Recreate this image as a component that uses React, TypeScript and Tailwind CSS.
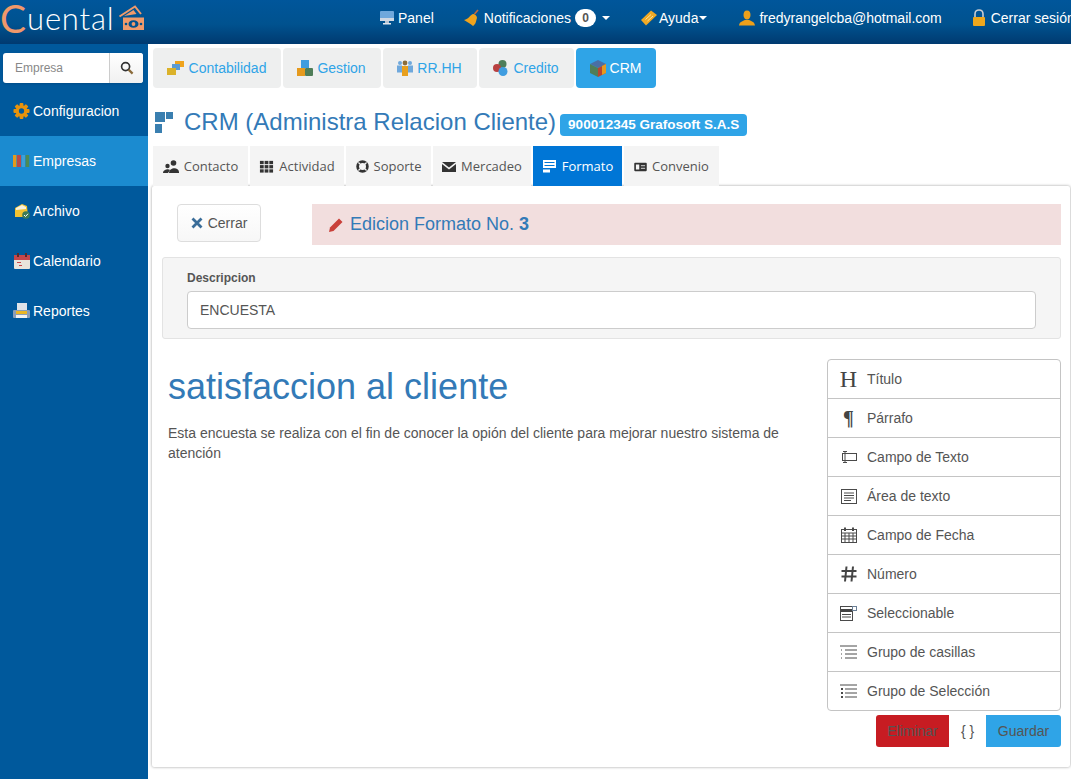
import React from "react";

const Gear = () => (
  <svg width="18" height="18" viewBox="0 0 18 18"><g fill="#e8930c"><circle cx="9" cy="9" r="6.2" /><rect x="7" y="0.500" width="4" height="17" rx="1" /><rect x="0.500" y="7" width="17" height="4" rx="1" /><rect x="7" y="0.500" width="4" height="17" rx="1" transform="rotate(45 9 9)" /><rect x="7" y="0.500" width="4" height="17" rx="1" transform="rotate(-45 9 9)" /></g><circle cx="9" cy="9" r="2.8" fill="#00599c" /></svg>
);
const Books = () => (
  <svg width="17" height="14" viewBox="0 0 17 14"><rect x="0" y="1" width="3.4" height="12" fill="#e39a1d" /><rect x="4" y="1" width="4" height="12" fill="#b84a4a" /><rect x="8.6" y="1" width="3.4" height="12" fill="#3f9fd8" /><rect x="12.6" y="1" width="3.6" height="12" fill="#4d8a54" /></svg>
);
const Folder = () => (
  <svg width="16" height="16" viewBox="0 0 16 16"><path d="M1 5 L8 1 L13 3 L14 14 L1 14 Z" fill="#f2c230" /><path d="M2 5 L8 2 L12 4 L12 6 L2 7 Z" fill="#f6f1e0" /><circle cx="12" cy="12" r="3.8" fill="#3c7a56" /><path d="M10 12 L11.5 13.5 L14 10.8" stroke="#fff" strokeWidth="1" fill="none" /></svg>
);
const Cal = () => (
  <svg width="16" height="16" viewBox="0 0 16 16"><rect x="0" y="2" width="16" height="14" rx="1" fill="#e8e4dc" /><rect x="0" y="2" width="16" height="5" fill="#c6474b" /><rect x="3" y="0" width="2" height="4" fill="#5a2a2a" /><rect x="11" y="0" width="2" height="4" fill="#5a2a2a" /><rect x="3" y="9" width="4" height="1" fill="#c6474b" /><rect x="5" y="12" width="3" height="1" fill="#c6474b" /></svg>
);
const Printer = () => (
  <svg width="17" height="16" viewBox="0 0 17 16"><rect x="4" y="0" width="10" height="8" fill="#dfe3e8" /><rect x="0" y="7" width="17" height="8" rx="1" fill="#8b9db5" /><rect x="3" y="8" width="11" height="3" fill="#eab624" /><rect x="3" y="12" width="11" height="3" fill="#f2f2f2" /></svg>
);
const Monitor = () => (
  <svg width="16" height="16" viewBox="0 0 16 16"><rect x="1" y="1" width="14" height="10" rx="1" fill="#6fa8dc" /><rect x="1" y="8" width="14" height="3" fill="#cfd8e3" /><rect x="6" y="11" width="4" height="2" fill="#b8c4d2" /><rect x="4" y="13" width="8" height="1.5" fill="#dfe6ee" /></svg>
);
const Bell = () => (
  <svg width="16" height="18" viewBox="0 0 16 18"><path d="M0 11 C5 10 6 6 9 5 C11 5 13 7 13 9 C12 12 12 15 9 17 C7 15 3 13 0 11 Z" fill="#efa31d" /><path d="M10.5 5 L14 1" stroke="#c46a3a" strokeWidth="1.600" /></svg>
);
const Ticket = () => (
  <svg width="18" height="16" viewBox="0 0 18 16"><path d="M1 10 L11 0.500 L17 5 L6 15.500 Z" fill="#f0a924" /><path d="M5.500 9.500 L11 4.500 M7.500 11 L13 6" stroke="#fde3a0" strokeWidth="1" /></svg>
);
const User = () => (
  <svg width="16" height="16" viewBox="0 0 16 16"><path d="M8 0.500 C10.500 0.500 11.500 2.500 11.500 5 C11.500 7.500 10 9.500 8 9.500 C6 9.500 4.500 7.500 4.500 5 C4.500 2.500 5.500 0.500 8 0.500 Z" fill="#eda01a" /><path d="M0 15.500 C0.500 11.500 4 11 6 10 H10 C12 11 15.500 11.500 16 15.500 Z" fill="#eda01a" /></svg>
);
const Lock = () => (
  <svg width="16" height="18" viewBox="0 0 16 18"><path d="M4 8 V5 C4 2 6 1 8 1 C10 1 12 2 12 5 V8" stroke="#c9cdd3" strokeWidth="1.6" fill="none" /><rect x="2" y="8" width="12" height="9" rx="1" fill="#eea71d" /></svg>
);
const Search = () => (
  <svg width="14" height="14" viewBox="0 0 14 14"><circle cx="5.6" cy="5.6" r="4" fill="none" stroke="#333" strokeWidth="1.7" /><path d="M8.6 8.6 L12.6 12.6" stroke="#8a6a3a" strokeWidth="2.2" /></svg>
);
const Cards = () => (
  <svg width="18" height="15" viewBox="0 0 18 15"><rect x="8" y="0" width="9" height="6" fill="#efa31d" /><rect x="5" y="3" width="8" height="6" fill="#5b9bd5" /><rect x="0" y="7" width="9" height="7" fill="#dbb22a" /></svg>
);
const Blocks = () => (
  <svg width="16" height="17" viewBox="0 0 16 17"><rect x="4" y="0" width="8" height="8" fill="#3f9de0" /><rect x="0" y="8" width="8" height="8" fill="#e59a1e" /><rect x="8" y="8" width="8" height="8" rx="1" fill="#4f7d58" /></svg>
);
const People = () => (
  <svg width="16" height="16" viewBox="0 0 16 16"><circle cx="3" cy="3" r="2" fill="#6fa8dc" /><circle cx="13" cy="3" r="2" fill="#6fa8dc" /><circle cx="8" cy="3" r="2.4" fill="#8a6d3b" /><rect x="0" y="5.5" width="5" height="7" fill="#6fa8dc" /><rect x="11" y="5.5" width="5" height="7" fill="#6fa8dc" /><rect x="5" y="6" width="6" height="10" fill="#e8a01e" /></svg>
);
const Circles = () => (
  <svg width="16" height="16" viewBox="0 0 16 16"><circle cx="9.5" cy="4" r="4" fill="#4d7d5a" /><circle cx="4" cy="8" r="4" fill="#b84040" /><circle cx="10" cy="11.5" r="4.5" fill="#3f9de0" /></svg>
);
const Cube = () => (
  <svg width="16" height="17" viewBox="0 0 16 17"><path d="M8 0 L16 4 L8 8 L0 4 Z" fill="#4a6fa5" /><path d="M0 4 L8 8 V17 L0 13 Z" fill="#4f7d58" /><path d="M16 4 L8 8 V17 L16 13 Z" fill="#b8442f" /><path d="M12 6 L16 4 V13 L12 15 Z" fill="#e59a1e" /></svg>
);
const Grid4 = () => (
  <svg width="18" height="21" viewBox="0 0 18 21" fill="#3a7fb0"><rect x="0" y="0" width="10" height="10" /><rect x="11" y="0" width="7" height="7" /><rect x="0" y="12" width="7" height="9" /></svg>
);
const Doc = ({ children }: { children: React.ReactNode }) => (
  <svg width="15" height="15" viewBox="0 0 16 16" fill="#333">{children}</svg>
);
const GroupI = () => <svg width="16" height="14" viewBox="0 0 16 14" fill="#333"><circle cx="10.500" cy="3" r="2.800" /><path d="M6 13 C6 7.500 15.500 6.500 16 12 V13 Z" /><circle cx="4.500" cy="6" r="2.200" /><path d="M0 13 C0 9.500 5.500 8.500 7 10 L5 13 Z" /></svg>;
const ThI = () => <Doc><rect x="1" y="2" width="4" height="3.500" /><rect x="6" y="2" width="4" height="3.500" /><rect x="11" y="2" width="4" height="3.500" /><rect x="1" y="6.500" width="4" height="3.500" /><rect x="6" y="6.500" width="4" height="3.500" /><rect x="11" y="6.500" width="4" height="3.500" /><rect x="1" y="11" width="4" height="3.500" /><rect x="6" y="11" width="4" height="3.500" /><rect x="11" y="11" width="4" height="3.500" /></Doc>;
const LifeI = () => <svg width="13" height="13" viewBox="0 0 16 16"><circle cx="8" cy="8" r="6" fill="none" stroke="#333" strokeWidth="3.400" /><path d="M3 3 L6 6 M13 3 L10 6 M3 13 L6 10 M13 13 L10 10" stroke="#f5f5f5" strokeWidth="1.600" /></svg>;
const MailI = () => <svg width="14" height="12" viewBox="0 0 14 12" fill="#333"><path d="M0 1 H14 L7 6.500 Z" /><path d="M0 3 L7 8.500 L14 3 V11 H0 Z" /></svg>;
const FormI = ({ c = "#fff" }: { c?: string }) => <svg width="15" height="15" viewBox="0 0 15 15" fill={c}><path d="M1 1 H14 V9 H1 Z M2.500 3 V4 H12.500 V3 Z M2.500 6 V7 H12.500 V6 Z" fillRule="evenodd" /><rect x="1" y="10.500" width="7" height="3" /></svg>;
const CardI = () => <svg width="13" height="10" viewBox="0 0 15 12"><rect x="0" y="1" width="15" height="10" rx="1" fill="#333" /><rect x="2" y="3" width="4" height="6" fill="#f5f5f5" /><rect x="8" y="4" width="5" height="1" fill="#f5f5f5" /><rect x="8" y="7" width="5" height="1" fill="#f5f5f5" /></svg>;

const sideItems = [
  { label: "Configuracion", icon: <Gear />, active: false },
  { label: "Empresas", icon: <Books />, active: true },
  { label: "Archivo", icon: <Folder />, active: false },
  { label: "Calendario", icon: <Cal />, active: false },
  { label: "Reportes", icon: <Printer />, active: false },
];

const modules = [
  { label: "Contabilidad", icon: <Cards />, w: "w-[128px]", active: false },
  { label: "Gestion", icon: <Blocks />, w: "w-[98px]", active: false },
  { label: "RR.HH", icon: <People />, w: "w-[94px]", active: false },
  { label: "Credito", icon: <Circles />, w: "w-[95px]", active: false },
  { label: "CRM", icon: <Cube />, w: "w-[80px]", active: true },
];

const tabs = [
  { label: "Contacto", icon: <GroupI />, w: "w-[95px]", active: false },
  { label: "Actividad", icon: <ThI />, w: "w-[94px]", active: false },
  { label: "Soporte", icon: <LifeI />, w: "w-[85px]", active: false },
  { label: "Mercadeo", icon: <MailI />, w: "w-[98px]", active: false },
  { label: "Formato", icon: <FormI />, w: "w-[89px]", active: true },
  { label: "Convenio", icon: <CardI />, w: "w-[95px]", active: false },
];

const s = "#4a4a4a";
const fields: { label: string; icon: React.ReactNode }[] = [
  { label: "Título", icon: <span className="font-['Liberation_Serif'] text-[24px] leading-none text-[#444]">H</span> },
  { label: "Párrafo", icon: <span className="font-['Liberation_Serif'] text-[20px] font-bold leading-none text-[#444]">¶</span> },
  { label: "Campo de Texto", icon: <svg width="17" height="14" viewBox="0 0 17 14" fill="none" stroke={s}><rect x="2.500" y="3.500" width="14" height="7" /><path d="M3 1.500 H7 M5 1.500 V12.500 M3 12.500 H7" /></svg> },
  { label: "Área de texto", icon: <svg width="16" height="15" viewBox="0 0 16 15" fill="none" stroke={s}><rect x="0.500" y="0.500" width="15" height="14" /><path d="M3 4 H13 M3 6.500 H13 M3 9 H13 M3 11.500 H10" /></svg> },
  { label: "Campo de Fecha", icon: <svg width="16" height="16" viewBox="0 0 16 16" fill="none" stroke={s}><rect x="0.500" y="2.500" width="15" height="13" /><path d="M0.500 6 H15.500 M0.500 9 H15.500 M0.500 12 H15.500 M4 6 V15.500 M8 6 V15.500 M12 6 V15.500" /><path d="M4 0.500 V4 M12 0.500 V4" strokeWidth="2" /></svg> },
  { label: "Número", icon: <svg width="16" height="16" viewBox="0 0 16 16" fill="none" stroke="#444" strokeWidth="2"><path d="M5.500 0.500 L4 15.500 M12 0.500 L10.500 15.500 M0.500 5 H15.500 M0.500 10.500 H15.500" /></svg> },
  { label: "Seleccionable", icon: <svg width="17" height="15" viewBox="0 0 17 15" fill="none" stroke={s}><rect x="0.500" y="0.500" width="12" height="14" /><rect x="1" y="3" width="11" height="3" fill="#444" stroke="none" /><path d="M2 8.500 H11 M2 11 H11" /><rect x="12.500" y="0.500" width="4" height="4" stroke="#6b7f95" /></svg> },
  { label: "Grupo de casillas", icon: <svg width="17" height="15" viewBox="0 0 17 15" fill="none" stroke={s}><path d="M0 1 H17 M5 5 H17 M5 9 H17 M5 13 H17" /><path d="M1 5 H3 M1 9 H3 M1 13 H3" strokeDasharray="1 1" /></svg> },
  { label: "Grupo de Selección", icon: <svg width="17" height="15" viewBox="0 0 17 15" fill="none" stroke={s}><path d="M0 1 H17 M5 5 H17 M5 9 H17 M5 13 H17" /><path d="M1 5 H3 M1 9 H3 M1 13 H3" strokeWidth="2" /></svg> },
];

const Caret = () => <span className="inline-block border-x-[4px] border-t-[4px] border-x-transparent border-t-white" />;

export default function App() {
  return (
    <div className="flex h-[779px] w-[1071px] flex-col overflow-hidden bg-white font-['Liberation_Sans',Arial,sans-serif] text-[14px] text-[#555]">
      <header className="flex h-[44px] shrink-0 items-center overflow-hidden bg-[linear-gradient(to_bottom,#00569b_0%,#00528f_55%,#003a70_100%)] text-white">
        <div className="flex h-[44px] w-[379px] shrink-0 items-center pb-[8px] font-['Lato',sans-serif]">
          <span className="text-[39px] font-normal leading-[44px] text-[#f0986a]">C</span>
          <span className="ml-[1px] text-[31px] font-light leading-[44px] tracking-[0.8px] text-white">uental</span>
          <svg width="27" height="26" viewBox="0 0 27 26" className="ml-[4px]" fill="none">
            <path d="M1.500 11.500 L17 1.500 L23 9" stroke="#ef9a6b" strokeWidth="2" />
            <path d="M6 11 L15.500 5 L18.500 9" fill="#ef9a6b" />
            <rect x="5" y="12.500" width="21" height="12.500" fill="#ef9a6b" />
            <ellipse cx="15.500" cy="19" rx="5" ry="3.800" fill="#00528f" />
            <circle cx="15.500" cy="19" r="1.900" fill="#ef9a6b" />
            <circle cx="8" cy="19" r="1.300" fill="#00528f" />
            <circle cx="23" cy="19" r="1.300" fill="#00528f" />
          </svg>
        </div>
        <div className="flex items-center gap-[3px] whitespace-nowrap pb-[8px]">
          <Monitor /><span>Panel</span>
        </div>
        <div className="ml-[30px] flex items-center whitespace-nowrap pb-[8px]">
          <Bell /><span className="ml-[4px]">Notificaciones</span>
          <span className="ml-[4px] flex h-[18px] w-[21px] items-center justify-center rounded-full bg-white text-[12px] font-bold text-[#555]">0</span>
          <span className="ml-[6px] flex"><Caret /></span>
        </div>
        <div className="ml-[30px] flex items-center whitespace-nowrap pb-[8px]">
          <Ticket /><span className="ml-[1px]">Ayuda</span><span className="ml-[1px] flex"><Caret /></span>
        </div>
        <div className="ml-[32px] flex items-center whitespace-nowrap pb-[8px]">
          <User /><span className="ml-[4px]">fredyrangelcba@hotmail.com</span>
        </div>
        <div className="ml-[29px] flex items-center whitespace-nowrap pb-[8px]">
          <Lock /><span className="ml-[4px]">Cerrar sesión</span>
        </div>
      </header>

      <div className="flex min-h-0 flex-1">
        <aside className="w-[148px] shrink-0 bg-[#00599c] pt-[9px]">
          <div className="mx-[3px] flex h-[30px] w-[140px] overflow-hidden rounded-[3px] bg-white shadow-sm">
            <span className="flex flex-1 items-center border-r border-[#ccc] pl-[12px] text-[12px] text-[#888]">Empresa</span>
            <span className="flex w-[33px] items-center justify-center bg-[linear-gradient(to_bottom,#fff,#f0f0f0)]"><Search /></span>
          </div>
          <nav className="mt-[3px]">
            {sideItems.map((it) => (
              <div key={it.label} className={`flex h-[50px] items-center gap-[3px] pl-[13px] text-white ${it.active ? "bg-[#1b8bd0]" : ""}`}>
                <span className="flex w-[17px] shrink-0 justify-center">{it.icon}</span>
                <span>{it.label}</span>
              </div>
            ))}
          </nav>
        </aside>

        <main className="min-w-0 flex-1">
          <div className="ml-[5px] mt-[4px] flex gap-[2px]">
            {modules.map((m) => (
              <div key={m.label} className={`flex h-[40px] items-center justify-center gap-[4px] rounded-[4px] pr-[1px] ${m.w} ${m.active ? "bg-[#2fa4e7] text-white" : "bg-[#eeefef] text-[#2fa4e7]"}`}>
                {m.icon}<span>{m.label}</span>
              </div>
            ))}
          </div>

          <div className="ml-[7px] mt-[14px] flex h-[40px] items-center">
            <Grid4 />
            <h1 className="ml-[11px] text-[24px] leading-none text-[#337ab7]">CRM (Administra Relacion Cliente)</h1>
            <span className="ml-[4px] mt-[6px] flex h-[22px] items-center rounded-[4px] bg-[#2fa4e7] px-[8px] text-[13.5px] font-bold text-white">900012345 Grafosoft S.A.S</span>
          </div>

          <div className="ml-[5px] mt-[4px] flex gap-[2px]">
            {tabs.map((t) => (
              <div key={t.label} className={`flex h-[40px] items-center justify-center gap-[5px] pt-[1px] font-['Open_Sans',sans-serif] text-[13px] ${t.w} ${t.active ? "bg-[#0076d6] text-white" : "bg-[#f4f4f4] text-[#555]"}`}>
                {t.icon}<span>{t.label}</span>
              </div>
            ))}
          </div>

          <section className="ml-[4px] mr-[1px] h-[581px] rounded-[2px] bg-white pl-[10px] pr-[9px] shadow-[0_0_3px_rgba(0,0,0,0.4)]">
            <div className="flex pt-[18px]">
              <div className="ml-[15px] flex h-[38px] w-[84px] items-center justify-center gap-[5px] rounded-[4px] border border-[#ddd] bg-[linear-gradient(to_bottom,#fff,#f7f7f7)] text-[#555]">
                <svg width="12" height="12" viewBox="0 0 12 12"><path d="M1.500 1.500 L10.500 10.500 M10.500 1.500 L1.500 10.500" stroke="#3a6d99" strokeWidth="2.800" /></svg>
                <span>Cerrar</span>
              </div>
              <div className="ml-[51px] flex h-[41px] flex-1 items-center bg-[#f2dede] pl-[16px] text-[18px] text-[#337ab7]">
                <svg width="16" height="16" viewBox="0 0 16 16"><path d="M1 15 L2 10.500 L11 1.500 L14.500 5 L5.500 14 Z" fill="#c9403a" /></svg>
                <span className="ml-[6px]">Edicion Formato No. <b>3</b></span>
              </div>
            </div>

            <div className="mt-[12px] h-[82px] rounded-[3px] border border-[#e3e3e3] bg-[#f5f5f5] px-[24px] pt-[13px]">
              <div className="text-[12px] font-bold leading-[14px] text-[#555]">Descripcion</div>
              <div className="mt-[6px] flex h-[38px] items-center rounded-[4px] border border-[#ccc] bg-white px-[12px] text-[#555]">ENCUESTA</div>
            </div>

            <div className="mt-[20px] flex">
              <div className="w-[665px] shrink-0 pl-[6px]">
                <h2 className="mt-[8px] text-[36px] leading-[40px] text-[#337ab7]">satisfaccion al cliente</h2>
                <p className="mt-[16px] text-[14px] leading-[20px] text-[#555]">Esta encuesta se realiza con el fin de conocer la opión del cliente para mejorar nuestro sistema de atención</p>
              </div>
              <div className="w-[234px] shrink-0">
                <ul className="rounded-[4px] border border-[#c4c4c4] bg-white">
                  {fields.map((f, i) => (
                    <li key={f.label} className={`flex items-center ${i ? "h-[39px] border-t border-[#c4c4c4]" : "h-[38px]"}`}>
                      <span className="flex w-[39px] shrink-0 justify-center pl-[2px]">{f.icon}</span>
                      <span>{f.label}</span>
                    </li>
                  ))}
                </ul>
                <div className="mt-[4px] flex justify-end">
                  <span className="flex h-[32px] w-[73px] items-center justify-center rounded-l-[3px] bg-[#c71c22] text-[#555]">Eliminar</span>
                  <span className="flex h-[32px] w-[37px] items-center justify-center text-[#555]">{"{ }"}</span>
                  <span className="flex h-[32px] w-[75px] items-center justify-center rounded-r-[3px] bg-[#2fa4e7] text-[#555]">Guardar</span>
                </div>
              </div>
            </div>
          </section>
        </main>
      </div>
    </div>
  );
}
